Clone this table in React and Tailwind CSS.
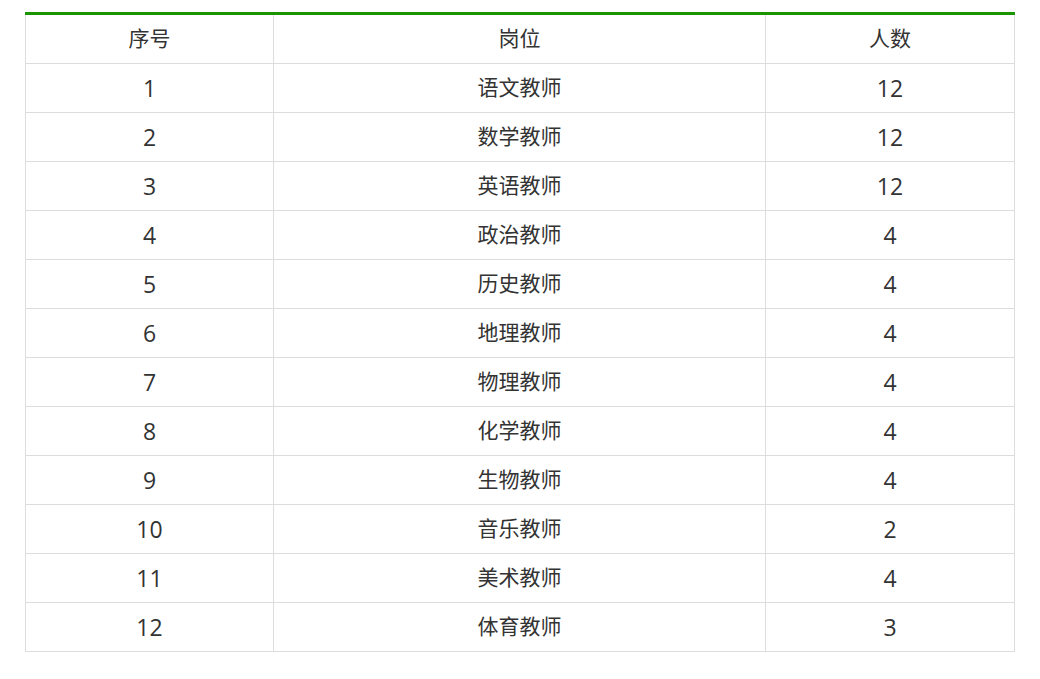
const rows = [
  ["1", "语文教师", "12"],
  ["2", "数学教师", "12"],
  ["3", "英语教师", "12"],
  ["4", "政治教师", "4"],
  ["5", "历史教师", "4"],
  ["6", "地理教师", "4"],
  ["7", "物理教师", "4"],
  ["8", "化学教师", "4"],
  ["9", "生物教师", "4"],
  ["10", "音乐教师", "2"],
  ["11", "美术教师", "4"],
  ["12", "体育教师", "3"],
]

export default function App() {
  return (
    <div className="min-h-[679px] bg-white px-[25px] pt-3 font-['Open_Sans','Noto_Sans_CJK_SC',sans-serif] text-[#333]">
      <table className="w-[989px] table-fixed border-collapse border-t-[3px] border-t-[#1a9400] text-center text-[21px]">
        <colgroup>
          <col className="w-[248px]" />
          <col className="w-[492px]" />
          <col className="w-[249px]" />
        </colgroup>
        <thead>
          <tr className="h-[50px]">
            <th className="border border-t-0 border-[#dddddd] font-normal">序号</th>
            <th className="border border-t-0 border-[#dddddd] font-normal">岗位</th>
            <th className="border border-t-0 border-[#dddddd] font-normal">人数</th>
          </tr>
        </thead>
        <tbody>
          {rows.map((row) => (
            <tr key={row[0]} className="h-[49px]">
              <td className="border border-[#dddddd] text-[23px]">{row[0]}</td>
              <td className="border border-[#dddddd]">{row[1]}</td>
              <td className="border border-[#dddddd] text-[23px]">{row[2]}</td>
            </tr>
          ))}
        </tbody>
      </table>
    </div>
  )
}
